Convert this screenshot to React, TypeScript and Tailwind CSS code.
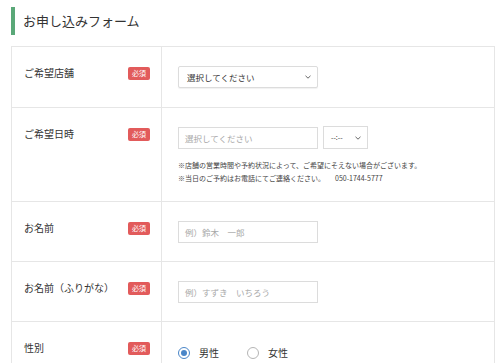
import React from "react";

const font = { fontFamily: '"Noto Sans CJK JP", "Noto Sans", sans-serif' };

const Badge = () => (
  <span className="flex h-[13px] w-[22px] items-center justify-center rounded-[2px] bg-[#e25b5b] text-[7px] leading-none text-white">
    必須
  </span>
);

interface RowProps {
  label: string;
  height: string;
  children: React.ReactNode;
}

const Row = ({ label, height, children }: RowProps) => (
  <div className={`flex border-t border-[#e6e6e6] ${height}`}>
    <div className="flex w-[150px] shrink-0 items-start justify-between border-r border-[#e6e6e6] pl-[12px] pr-[11px] pt-[20px]">
      <span className="text-[10px] leading-[12px] text-[#333]">{label}</span>
      <Badge />
    </div>
    <div className="flex-1 pl-[16px] pt-[19px]">{children}</div>
  </div>
);

const Chevron = () => (
  <svg width="6" height="4" viewBox="0 0 6 4" className="shrink-0">
    <path d="M0.5 0.8 L3 3.2 L5.5 0.8" fill="none" stroke="#555" strokeWidth="0.9" />
  </svg>
);

const TextBox = ({ placeholder }: { placeholder: string }) => (
  <div className="flex h-[22px] w-[140px] items-center border border-[#dcdcdc] bg-white px-[6px] text-[8.5px] text-[#a8a8a8]">
    {placeholder}
  </div>
);

export default function App() {
  return (
    <div className="h-[363px] w-[500px] overflow-hidden bg-white" style={font}>
      <div className="px-[11px] pt-[7px]">
        <div className="flex h-[28px] items-center border-l-[4px] border-[#5aa878] pl-[8px] text-[13px] text-[#333]">
          お申し込みフォーム
        </div>
      </div>
      <div className="ml-[11px] mr-[5px] mt-[11px] border-x border-[#e6e6e6]">
        <Row label="ご希望店舗" height="h-[61px]">
          <div className="flex h-[22px] w-[140px] items-center justify-between rounded-[2px] border border-[#dcdcdc] bg-white pl-[8px] pr-[6px] text-[8.5px] text-[#333] shadow-[0_1px_1px_rgba(0,0,0,0.06)]">
            選択してください
            <Chevron />
          </div>
        </Row>
        <Row label="ご希望日時" height="h-[94px]">
          <div className="flex items-start gap-[5px]">
            <TextBox placeholder="選択してください" />
            <div className="mt-[-1px] flex h-[23px] w-[45px] items-center justify-between border border-[#dcdcdc] bg-white pl-[7px] pr-[6px] text-[7px] text-[#333]">
              --:--
              <Chevron />
            </div>
          </div>
          <div className="mt-[10px] text-[7px] leading-[13px] text-[#444]">
            <p>※店舗の営業時間や予約状況によって、ご希望にそえない場合がございます。</p>
            <p>
              ※当日のご予約はお電話にてご連絡ください。
              <span className="ml-[10px]">050-1744-5777</span>
            </p>
          </div>
        </Row>
        <Row label="お名前" height="h-[60px]">
          <TextBox placeholder="例）鈴木　一郎" />
        </Row>
        <Row label="お名前（ふりがな）" height="h-[60px]">
          <TextBox placeholder="例）すずき　いちろう" />
        </Row>
        <Row label="性別" height="h-[60px]">
          <div className="mt-[4px] flex items-center text-[10px] text-[#333]">
            <span className="flex h-[12px] w-[12px] items-center justify-center rounded-full border border-[#4a86c8]">
              <span className="h-[6px] w-[6px] rounded-full bg-[#4a86c8]" />
            </span>
            <span className="ml-[9px]">男性</span>
            <span className="ml-[28px] h-[12px] w-[12px] rounded-full border border-[#b5b5b5]" />
            <span className="ml-[9px]">女性</span>
          </div>
        </Row>
      </div>
    </div>
  );
}
